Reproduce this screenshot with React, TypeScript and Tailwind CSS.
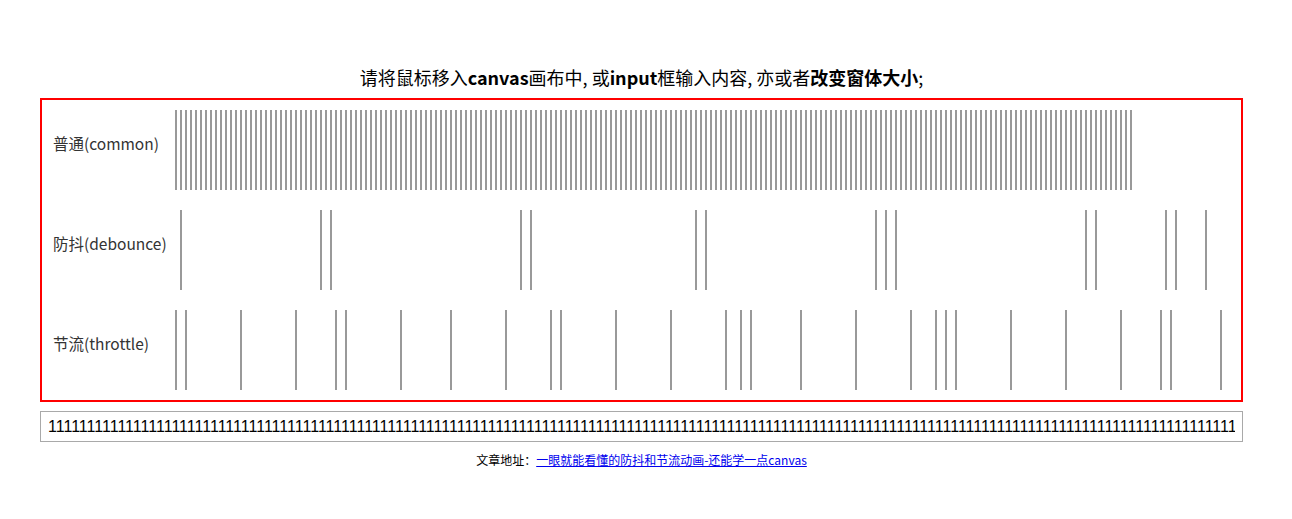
const COMMON = Array.from({ length: 192 }, (_, i) => i * 5);
const DEBOUNCE = [5, 145, 155, 345, 355, 520, 530, 700, 710, 720, 910, 920, 990, 1000, 1030];
const THROTTLE = [
  0, 10, 65, 120, 160, 170, 225, 275, 330, 375, 385, 440, 495, 550, 565, 575, 625, 680, 735, 760,
  770, 780, 835, 890, 945, 985, 995, 1045,
];

const ROWS = [
  { label: '普通(common)', ticks: COMMON },
  { label: '防抖(debounce)', ticks: DEBOUNCE },
  { label: '节流(throttle)', ticks: THROTTLE },
];

function TickRow({ label, ticks }: { label: string; ticks: number[] }) {
  return (
    <div className="flex h-[100px] items-start">
      <div className="w-[133px] shrink-0 pl-[11px] mt-[33px] text-[15.5px] leading-[20px] text-[#333] whitespace-nowrap">
        {label}
      </div>
      <svg width="1070" height="100" className="shrink-0">
        {ticks.map((x) => (
          <rect key={x} x={x} y={10} width={2} height={80} fill="#999" />
        ))}
      </svg>
    </div>
  );
}

export default function App() {
  const ones = '1'.repeat(154);

  return (
    <div className="min-h-[519px] bg-white [font-family:'Noto_Sans_CJK_SC',sans-serif]">
      <div className="ml-[40px] w-[1203px] pt-[64px]">
        <p className="text-center text-[18px] leading-[26px] text-black">
          请将鼠标移入<b>canvas</b>画布中, 或<b>input</b>框输入内容, 亦或者<b>改变窗体大小</b>;
        </p>

        <div className="mt-[8px] border-2 border-[#f00] overflow-hidden">
          {ROWS.map((row) => (
            <TickRow key={row.label} label={row.label} ticks={row.ticks} />
          ))}
        </div>

        <input
          readOnly
          value={ones}
          className="mt-[9px] block w-full h-[31px] border border-[#a9a9a9] px-[7px] text-[16px] text-black outline-none [font-family:'Liberation_Sans',Arial,sans-serif]"
        />

        <p className="mt-[10px] text-center text-[12px] leading-[16px] text-black">
          文章地址：
          <a href="#" className="text-[#00e] underline">
            一眼就能看懂的防抖和节流动画-还能学一点canvas
          </a>
        </p>
      </div>
    </div>
  );
}
